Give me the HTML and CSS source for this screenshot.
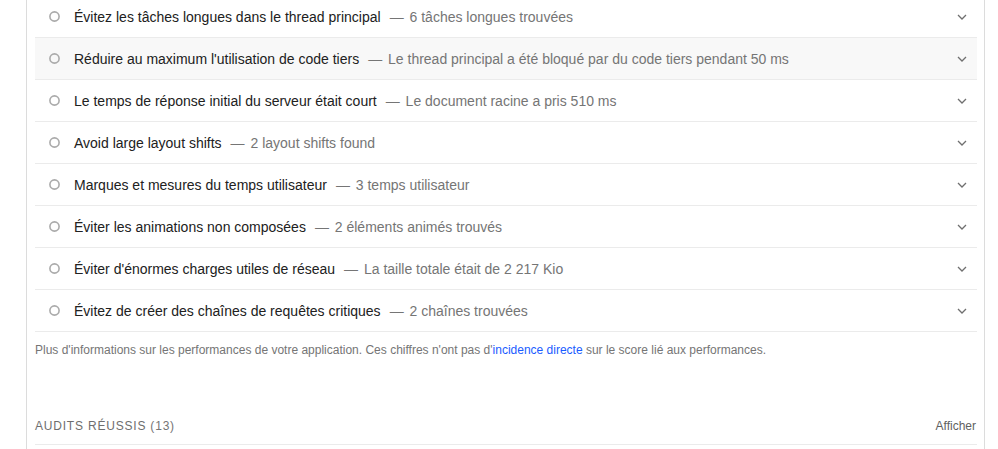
FILE: index.html
```html
<!DOCTYPE html>
<html lang="fr">
<head>
<meta charset="utf-8">
<link rel="stylesheet" href="styles.css">
</head>
<body>
<div class="panel">
  <div class="audits">
    <div class="audit">
      <svg class="status" width="11" height="11" viewBox="0 0 11 11"><circle cx="5.5" cy="5.5" r="4.6" fill="none" stroke="#aaaaaa" stroke-width="1.6"/></svg>
      <span class="title">Évitez les tâches longues dans le thread principal</span>
      <span class="display"><span class="dash">—</span> 6 tâches longues trouvées</span>
      <svg class="chev" width="10" height="6" viewBox="0 0 10 6"><path d="M1 1l4 4 4-4" fill="none" stroke="#6f6f6f" stroke-width="1.3"/></svg>
    </div>
    <div class="audit hover">
      <svg class="status" width="11" height="11" viewBox="0 0 11 11"><circle cx="5.5" cy="5.5" r="4.6" fill="none" stroke="#aaaaaa" stroke-width="1.6"/></svg>
      <span class="title">Réduire au maximum l'utilisation de code tiers</span>
      <span class="display"><span class="dash">—</span> Le thread principal a été bloqué par du code tiers pendant 50 ms</span>
      <svg class="chev" width="10" height="6" viewBox="0 0 10 6"><path d="M1 1l4 4 4-4" fill="none" stroke="#6f6f6f" stroke-width="1.3"/></svg>
    </div>
    <div class="audit">
      <svg class="status" width="11" height="11" viewBox="0 0 11 11"><circle cx="5.5" cy="5.5" r="4.6" fill="none" stroke="#aaaaaa" stroke-width="1.6"/></svg>
      <span class="title">Le temps de réponse initial du serveur était court</span>
      <span class="display"><span class="dash">—</span> Le document racine a pris 510 ms</span>
      <svg class="chev" width="10" height="6" viewBox="0 0 10 6"><path d="M1 1l4 4 4-4" fill="none" stroke="#6f6f6f" stroke-width="1.3"/></svg>
    </div>
    <div class="audit">
      <svg class="status" width="11" height="11" viewBox="0 0 11 11"><circle cx="5.5" cy="5.5" r="4.6" fill="none" stroke="#aaaaaa" stroke-width="1.6"/></svg>
      <span class="title">Avoid large layout shifts</span>
      <span class="display"><span class="dash">—</span> 2 layout shifts found</span>
      <svg class="chev" width="10" height="6" viewBox="0 0 10 6"><path d="M1 1l4 4 4-4" fill="none" stroke="#6f6f6f" stroke-width="1.3"/></svg>
    </div>
    <div class="audit">
      <svg class="status" width="11" height="11" viewBox="0 0 11 11"><circle cx="5.5" cy="5.5" r="4.6" fill="none" stroke="#aaaaaa" stroke-width="1.6"/></svg>
      <span class="title">Marques et mesures du temps utilisateur</span>
      <span class="display"><span class="dash">—</span> 3 temps utilisateur</span>
      <svg class="chev" width="10" height="6" viewBox="0 0 10 6"><path d="M1 1l4 4 4-4" fill="none" stroke="#6f6f6f" stroke-width="1.3"/></svg>
    </div>
    <div class="audit">
      <svg class="status" width="11" height="11" viewBox="0 0 11 11"><circle cx="5.5" cy="5.5" r="4.6" fill="none" stroke="#aaaaaa" stroke-width="1.6"/></svg>
      <span class="title">Éviter les animations non composées</span>
      <span class="display"><span class="dash">—</span> 2 éléments animés trouvés</span>
      <svg class="chev" width="10" height="6" viewBox="0 0 10 6"><path d="M1 1l4 4 4-4" fill="none" stroke="#6f6f6f" stroke-width="1.3"/></svg>
    </div>
    <div class="audit">
      <svg class="status" width="11" height="11" viewBox="0 0 11 11"><circle cx="5.5" cy="5.5" r="4.6" fill="none" stroke="#aaaaaa" stroke-width="1.6"/></svg>
      <span class="title">Éviter d'énormes charges utiles de réseau</span>
      <span class="display"><span class="dash">—</span> La taille totale était de 2 217 Kio</span>
      <svg class="chev" width="10" height="6" viewBox="0 0 10 6"><path d="M1 1l4 4 4-4" fill="none" stroke="#6f6f6f" stroke-width="1.3"/></svg>
    </div>
    <div class="audit">
      <svg class="status" width="11" height="11" viewBox="0 0 11 11"><circle cx="5.5" cy="5.5" r="4.6" fill="none" stroke="#aaaaaa" stroke-width="1.6"/></svg>
      <span class="title">Évitez de créer des chaînes de requêtes critiques</span>
      <span class="display"><span class="dash">—</span> 2 chaînes trouvées</span>
      <svg class="chev" width="10" height="6" viewBox="0 0 10 6"><path d="M1 1l4 4 4-4" fill="none" stroke="#6f6f6f" stroke-width="1.3"/></svg>
    </div>
  </div>
  <p class="note">Plus d'informations sur les performances de votre application. Ces chiffres n'ont pas d'<a href="#">incidence directe</a> sur le score lié aux performances.</p>
  <div class="clump">
    <span class="clump-title">Audits réussis <span class="count">(13)</span></span>
    <span class="show">Afficher</span>
  </div>
</div>
</body>
</html>
```

FILE: styles.css
```css
html, body {
  margin: 0;
  padding: 0;
  background: #ffffff;
  overflow: hidden;
}

body {
  font-family: "Liberation Sans", Arial, sans-serif;
  color: #212121;
}

.panel {
  margin: -4px 0 0 26px;
  width: 942px;
  padding: 0 7px 0 8px;
  border-left: 1px solid #dcdcdc;
  border-right: 1px solid #dcdcdc;
  height: 470px;
}

.audit {
  display: flex;
  align-items: center;
  height: 41px;
  border-bottom: 1px solid #ebebeb;
  font-size: 14px;
  padding: 0 10px 0 14px;
}

.audit.hover {
  background: #f8f8f8;
}

.status {
  flex: none;
  margin-right: 14px;
}

.title {
  color: #212121;
  white-space: nowrap;
}

.display {
  color: #757575;
  margin-left: 9px;
  white-space: nowrap;
}

.dash {
  margin-right: 2px;
}

.chev {
  margin-left: auto;
  flex: none;
}

.note {
  margin: 10px 0 0;
  font-size: 12px;
  line-height: 16px;
  color: #757575;
}

.note a {
  color: #1a5cff;
  text-decoration: none;
}

.clump {
  display: flex;
  justify-content: space-between;
  align-items: center;
  margin-top: 49px;
  height: 37px;
  border-bottom: 1px solid #ebebeb;
  font-size: 12px;
}

.clump-title {
  text-transform: uppercase;
  letter-spacing: 0.8px;
  color: #6e6e6e;
}

.count {
  color: #757575;
}

.show {
  color: #5f5f5f;
  margin-right: 1px;
}
```
